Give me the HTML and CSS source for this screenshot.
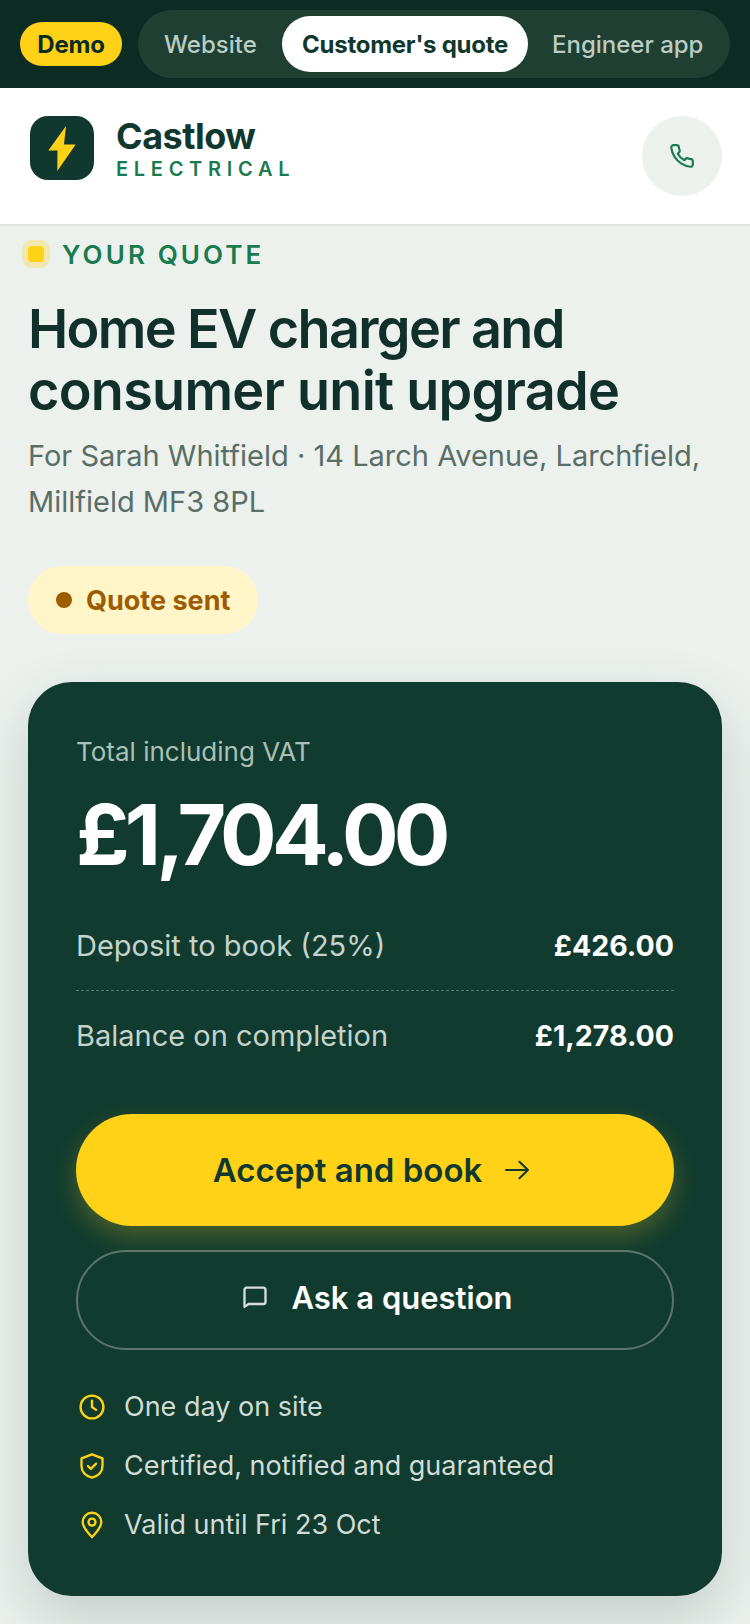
FILE: index.html
```html
<!doctype html>
<html>
  <head>
    <title>Castlow Electrical quote</title>
    <meta charset="utf-8">
    <meta name="viewport" content="width=device-width, initial-scale=1">
    <link rel="stylesheet" href="styles.css">
  </head>

  <body>
    <div class="demo-bar">
      <span class="demo-tag">Demo</span>
      <div class="switcher">
        <a class="switch">Website</a>
        <a class="switch active">Customer's quote</a>
        <a class="switch">Engineer app</a>
      </div>
    </div>

    <header class="site-header">
      <div class="brand">
        <div class="logo">
          <svg viewBox="0 0 64 64" width="64" height="64"><polygon points="36,10 18.300,34.500 27.500,34.500 27.300,55 45.700,28.500 34,28.500" fill="#ffd217"/></svg>
        </div>
        <div class="brand-text">
          <div class="brand-name">Castlow</div>
          <div class="brand-sub">ELECTRICAL</div>
        </div>
      </div>
      <div class="call">
        <svg viewBox="0 0 24 24" width="26" height="26" fill="none" stroke="#1a7a50" stroke-width="2" stroke-linecap="round" stroke-linejoin="round"><path d="M22 16.920v3a2 2 0 0 1-2.180 2 19.790 19.790 0 0 1-8.630-3.070 19.500 19.500 0 0 1-6-6 19.790 19.790 0 0 1-3.070-8.670A2 2 0 0 1 4.110 2h3a2 2 0 0 1 2 1.720 12.840 12.840 0 0 0 .7 2.810 2 2 0 0 1-.45 2.110L8.090 9.910a16 16 0 0 0 6 6l1.270-1.270a2 2 0 0 1 2.110-.45 12.840 12.840 0 0 0 2.810.7A2 2 0 0 1 22 16.920z"/></svg>
      </div>
    </header>

    <main class="page">
      <div class="eyebrow"><span class="pulse"></span>YOUR QUOTE</div>
      <h1><span class="line-one">Home EV charger and</span> <span class="line-two">consumer unit upgrade</span></h1>
      <p class="for">For Sarah Whitfield · 14 Larch Avenue, Larchfield, Millfield MF3 8PL</p>
      <div class="status"><span class="status-dot"></span>Quote sent</div>

      <section class="card">
        <div class="total-label">Total including VAT</div>
        <div class="total">£1,704.00</div>
        <div class="row row-first">
          <span>Deposit to book (25%)</span>
          <strong>£426.00</strong>
        </div>
        <div class="row">
          <span>Balance on completion</span>
          <strong>£1,278.00</strong>
        </div>

        <button class="btn btn-accept">
          Accept and book
          <svg viewBox="0 0 24 24" width="28" height="28" fill="none" stroke="currentColor" stroke-width="1.800" stroke-linecap="round" stroke-linejoin="round"><path d="M2.600 12h18.800M14.100 5l7.300 7-7.300 7"/></svg>
        </button>
        <button class="btn btn-ask">
          <svg viewBox="0 0 24 24" width="28" height="28" fill="none" stroke="#d5dfda" stroke-width="2" stroke-linecap="round" stroke-linejoin="round"><path d="M3 20.500V6a2 2 0 0 1 2-2h14a2 2 0 0 1 2 2v10a2 2 0 0 1-2 2H6.500z"/></svg>
          Ask a question
        </button>

        <ul class="facts">
          <li>
            <svg viewBox="0 0 24 24" width="28" height="28" fill="none" stroke="#ffd217" stroke-width="2" stroke-linecap="round" stroke-linejoin="round"><circle cx="12" cy="12" r="9.800"/><path d="M12 6.500V12l3.500 2.500"/></svg>
            One day on site
          </li>
          <li>
            <svg viewBox="0 0 24 24" width="28" height="28" fill="none" stroke="#ffd217" stroke-width="2" stroke-linecap="round" stroke-linejoin="round"><path d="M12 2l9 3.500V12c0 5-3.800 8.500-9 10-5.200-1.500-9-5-9-10V5.500z"/><path d="M8.500 12l2.500 2.500 4.500-4.500"/></svg>
            Certified, notified and guaranteed
          </li>
          <li>
            <svg viewBox="0 0 24 24" width="28" height="28" fill="none" stroke="#ffd217" stroke-width="2" stroke-linecap="round" stroke-linejoin="round"><path d="M12 22.500c-4-4.500-8-8.500-8-13a8 8 0 0 1 16 0c0 4.500-4 8.500-8 13z"/><circle cx="12" cy="9.500" r="3"/></svg>
            Valid until Fri 23 Oct
          </li>
        </ul>
      </section>
    </main>
  </body>
</html>
```

FILE: styles.css
```css
* {
  box-sizing: border-box;
}
html, body {
  margin: 0;
  height: 100%;
}
body {
  width: 750px;
  height: 1624px;
  overflow: hidden;
  background: #ecf1ee;
  color: #11382e;
  font-family: Inter, "Liberation Sans", sans-serif;
}

/* demo switcher */
.demo-bar {
  height: 88px;
  background: #0c2b22;
  display: flex;
  align-items: center;
  padding: 0 20px;
  gap: 16px;
}
.demo-tag {
  width: 102px;
  height: 44px;
  border-radius: 22px;
  background: #ffd217;
  color: #0c2b22;
  font-size: 24px;
  font-weight: 700;
  letter-spacing: -0.2px;
  display: flex;
  align-items: center;
  justify-content: center;
}
.switcher {
  width: 592px;
  height: 68px;
  border-radius: 34px;
  background: #1f3f32;
  display: flex;
  align-items: center;
  padding: 6px;
}
.switch {
  height: 56px;
  border-radius: 28px;
  padding: 0 20px;
  display: flex;
  align-items: center;
  font-size: 24px;
  font-weight: 500;
  color: #b9cdc4;
  white-space: nowrap;
}
.switch:first-child {
  width: 138px;
}
.switch.active {
  width: 246px;
  background: #fff;
  color: #11382e;
  font-weight: 700;
  letter-spacing: -0.25px;
  margin-right: 4px;
}

/* header */
.site-header {
  height: 138px;
  background: #fff;
  border-bottom: 2px solid #dde3df;
  display: flex;
  justify-content: space-between;
  padding: 28px 28px 0 30px;
}
.brand {
  display: flex;
  gap: 22px;
}
.logo {
  width: 64px;
  height: 64px;
  border-radius: 18px;
  background: #11382e;
}
.logo svg {
  display: block;
}
.brand-name {
  font-size: 36px;
  font-weight: 700;
  line-height: 40px;
  letter-spacing: -0.5px;
  color: #11382e;
}
.brand-sub {
  margin-top: 1px;
  font-size: 20px;
  font-weight: 600;
  line-height: 24px;
  letter-spacing: 5.7px;
  color: #1a7a50;
}
.call {
  width: 80px;
  height: 80px;
  border-radius: 50%;
  background: #ecf1ee;
  display: flex;
  align-items: center;
  justify-content: center;
}

/* intro */
.page {
  padding: 14px 28px 0;
}
.eyebrow {
  display: flex;
  align-items: center;
  gap: 12px;
  margin-left: -6px;
  height: 28px;
  font-size: 26px;
  font-weight: 600;
  letter-spacing: 3.1px;
  color: #1a7a50;
}
.pulse {
  width: 16px;
  height: 16px;
  margin: 6px;
  border-radius: 4px;
  background: #ffd217;
  box-shadow: 0 0 0 6px rgba(255, 210, 23, 0.3);
}
h1 {
  margin: 30px 0 0;
  font-size: 54px;
  font-weight: 600;
  line-height: 62px;
  color: #12302a;
}
.line-one {
  display: block;
  letter-spacing: -1.65px;
}
.line-two {
  display: block;
  letter-spacing: -0.74px;
}
.for {
  margin: 11px 0 0;
  font-size: 29px;
  line-height: 46px;
  color: #5a6e66;
}
.status {
  margin-top: 41px;
  width: 230px;
  height: 68px;
  border-radius: 34px;
  background: #fff5c9;
  color: #9c5c00;
  font-size: 27px;
  font-weight: 700;
  display: flex;
  align-items: center;
  gap: 14px;
  padding-left: 28px;
}
.status-dot {
  width: 16px;
  height: 16px;
  border-radius: 50%;
  background: #9c5c00;
}

/* price card */
.card {
  margin-top: 48px;
  height: 914px;
  border-radius: 44px;
  background: #113b2f;
  padding: 52px 48px 0;
  box-shadow: 0 24px 60px rgba(17, 59, 47, 0.19);
}
.total-label {
  font-size: 26px;
  line-height: 36px;
  color: #a9c0b6;
}
.total {
  margin-top: 15px;
  font-size: 84px;
  font-weight: 700;
  line-height: 100px;
  letter-spacing: -4.8px;
  color: #fff;
}
.row {
  display: flex;
  justify-content: space-between;
  align-items: center;
  height: 89px;
  font-size: 29px;
  color: #c3d3cc;
}
.row-first {
  margin-top: 16px;
  height: 90px;
  border-bottom: 1px dashed rgba(255, 255, 255, 0.3);
}
.row strong {
  font-weight: 700;
  font-size: 28.5px;
  color: #fff;
}
.btn {
  display: flex;
  align-items: center;
  justify-content: center;
  width: 100%;
  border-radius: 56px;
  font-family: inherit;
  font-weight: 600;
}
.btn-accept {
  margin-top: 34px;
  height: 112px;
  border: 0;
  gap: 21px;
  padding: 0 6px 0 0;
  background: #ffd217;
  color: #11382e;
  font-size: 33px;
  box-shadow: 0 10px 24px rgba(255, 210, 23, 0.25);
}
.btn-ask {
  margin-top: 24px;
  height: 100px;
  gap: 22px;
  padding: 0 0 6px 4px;
  background: transparent;
  border: 2px solid rgba(255, 255, 255, 0.3);
  color: #fff;
  font-size: 31px;
}
.facts {
  list-style: none;
  margin: 27px 0 0;
  padding: 0 0 0 2px;
}
.facts li {
  display: flex;
  align-items: center;
  gap: 18px;
  height: 59px;
  font-size: 27px;
  color: #d0dcd6;
}
```
